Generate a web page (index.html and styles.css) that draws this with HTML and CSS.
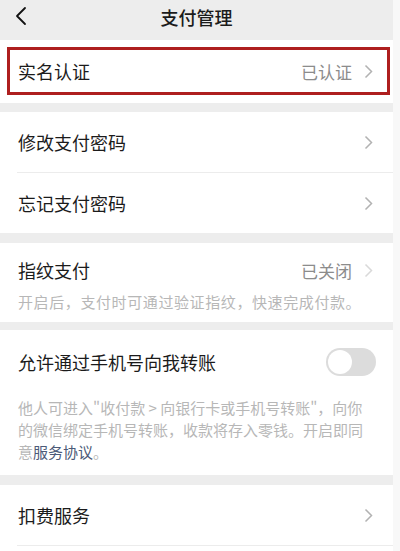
FILE: index.html
```html
<!DOCTYPE html>
<html lang="zh">
<head>
<meta charset="utf-8">
<link rel="stylesheet" href="styles.css">
</head>
<body>
<div class="page">
  <header class="nav">
    <svg class="back" width="14" height="20" viewBox="0 0 14 20"><path d="M11 2 L3 10 L11 18" fill="none" stroke="#111" stroke-width="1.8" stroke-linecap="round" stroke-linejoin="round"/></svg>
    <div class="title">支付管理</div>
  </header>

  <section class="group first">
    <div class="row highlight">
      <span class="label">实名认证</span>
      <span class="value">已认证</span>
      <svg class="chev" width="9" height="15" viewBox="0 0 9 15"><path d="M1.5 1.5 L7.5 7.5 L1.5 13.5" fill="none" stroke="#b2b2b2" stroke-width="1.5"/></svg>
    </div>
  </section>

  <section class="group">
    <div class="row">
      <span class="label">修改支付密码</span>
      <svg class="chev" width="9" height="15" viewBox="0 0 9 15"><path d="M1.5 1.5 L7.5 7.5 L1.5 13.5" fill="none" stroke="#b2b2b2" stroke-width="1.5"/></svg>
    </div>
    <div class="row divided">
      <span class="label">忘记支付密码</span>
      <svg class="chev" width="9" height="15" viewBox="0 0 9 15"><path d="M1.5 1.5 L7.5 7.5 L1.5 13.5" fill="none" stroke="#b2b2b2" stroke-width="1.5"/></svg>
    </div>
  </section>

  <section class="group block finger">
    <div class="head">
      <span class="label">指纹支付</span>
      <span class="value">已关闭</span>
      <svg class="chev" width="9" height="15" viewBox="0 0 9 15"><path d="M1.5 1.5 L7.5 7.5 L1.5 13.5" fill="none" stroke="#d9d9d9" stroke-width="1.5"/></svg>
    </div>
    <p class="desc">开启后，支付时可通过验证指纹，快速完成付款。</p>
  </section>

  <section class="group block phone">
    <div class="head">
      <span class="label">允许通过手机号向我转账</span>
      <span class="toggle"><span class="knob"></span></span>
    </div>
    <p class="desc long">他人可进入"收付款 &gt; 向银行卡或手机号转账"，向你的微信绑定手机号转账，收款将存入零钱。开启即同意<span class="link">服务协议</span>。</p>
  </section>

  <section class="group last">
    <div class="row">
      <span class="label">扣费服务</span>
      <svg class="chev" width="9" height="15" viewBox="0 0 9 15"><path d="M1.5 1.5 L7.5 7.5 L1.5 13.5" fill="none" stroke="#b2b2b2" stroke-width="1.5"/></svg>
    </div>
    <div class="divider"></div>
  </section>
</div>
</body>
</html>
```

FILE: styles.css
```css
html, body {
  margin: 0;
  padding: 0;
  background: #f8f8f8;
}
body {
  font-family: "Noto Sans CJK SC", "Noto Sans", sans-serif;
  color: #1b1b1b;
  overflow: hidden;
}
.page {
  width: 393px;
  height: 551px;
  background: #ededed;
  display: flex;
  flex-direction: column;
}
.nav {
  height: 40px;
  display: flex;
  align-items: center;
  justify-content: center;
  position: relative;
  background: #ededed;
}
.back {
  position: absolute;
  left: 14px;
  top: 6px;
}
.title {
  font-size: 18px;
  font-weight: 500;
  line-height: 24px;
  margin-top: -6px;
}
.group {
  background: #fff;
  margin-bottom: 10px;
}
.group.first {
  padding: 7px 0 8px;
  margin-bottom: 9px;
}
.row {
  height: 60px;
  display: flex;
  align-items: center;
  padding: 0 20px 0 18px;
  box-sizing: border-box;
}
.row.divided {
  border-top: 1px solid #ececec;
  margin-left: 17px;
  padding-left: 1px;
  height: 61px;
}
.row.highlight {
  height: 48px;
  margin: 0 3px 0 7px;
  border: 3px solid #ae1f1f;
  padding: 0 14px 0 8px;
}
.label {
  font-size: 18px;
  line-height: 24px;
  flex: 1;
}
.value {
  font-size: 17px;
  color: #8c8c8c;
  margin-right: 12px;
}
.chev {
  display: block;
}
.block {
  padding: 15px 20px 10px 18px;
}
.head {
  display: flex;
  align-items: center;
  height: 24px;
}
.desc {
  margin: 10px 0 0;
  font-size: 15px;
  line-height: 20px;
  color: #b7b7b7;
}
.finger {
  margin-bottom: 8px;
}
.finger .desc {
  letter-spacing: 0.6px;
}
.phone {
  padding: 20px 17px 12px 18px;
}
.phone .desc {
  margin-top: 23px;
  line-height: 22px;
  padding-right: 10px;
}
.link {
  color: #4c5a78;
}
.toggle {
  width: 50px;
  height: 28px;
  border-radius: 14px;
  background: #dcdcdc;
  position: relative;
  display: block;
}
.knob {
  position: absolute;
  left: 2px;
  top: 2px;
  width: 24px;
  height: 24px;
  border-radius: 50%;
  background: #fff;
}
.last {
  flex: 1;
  margin-bottom: 0;
}
.divider {
  height: 1px;
  background: #ececec;
  margin-left: 17px;
}
```
